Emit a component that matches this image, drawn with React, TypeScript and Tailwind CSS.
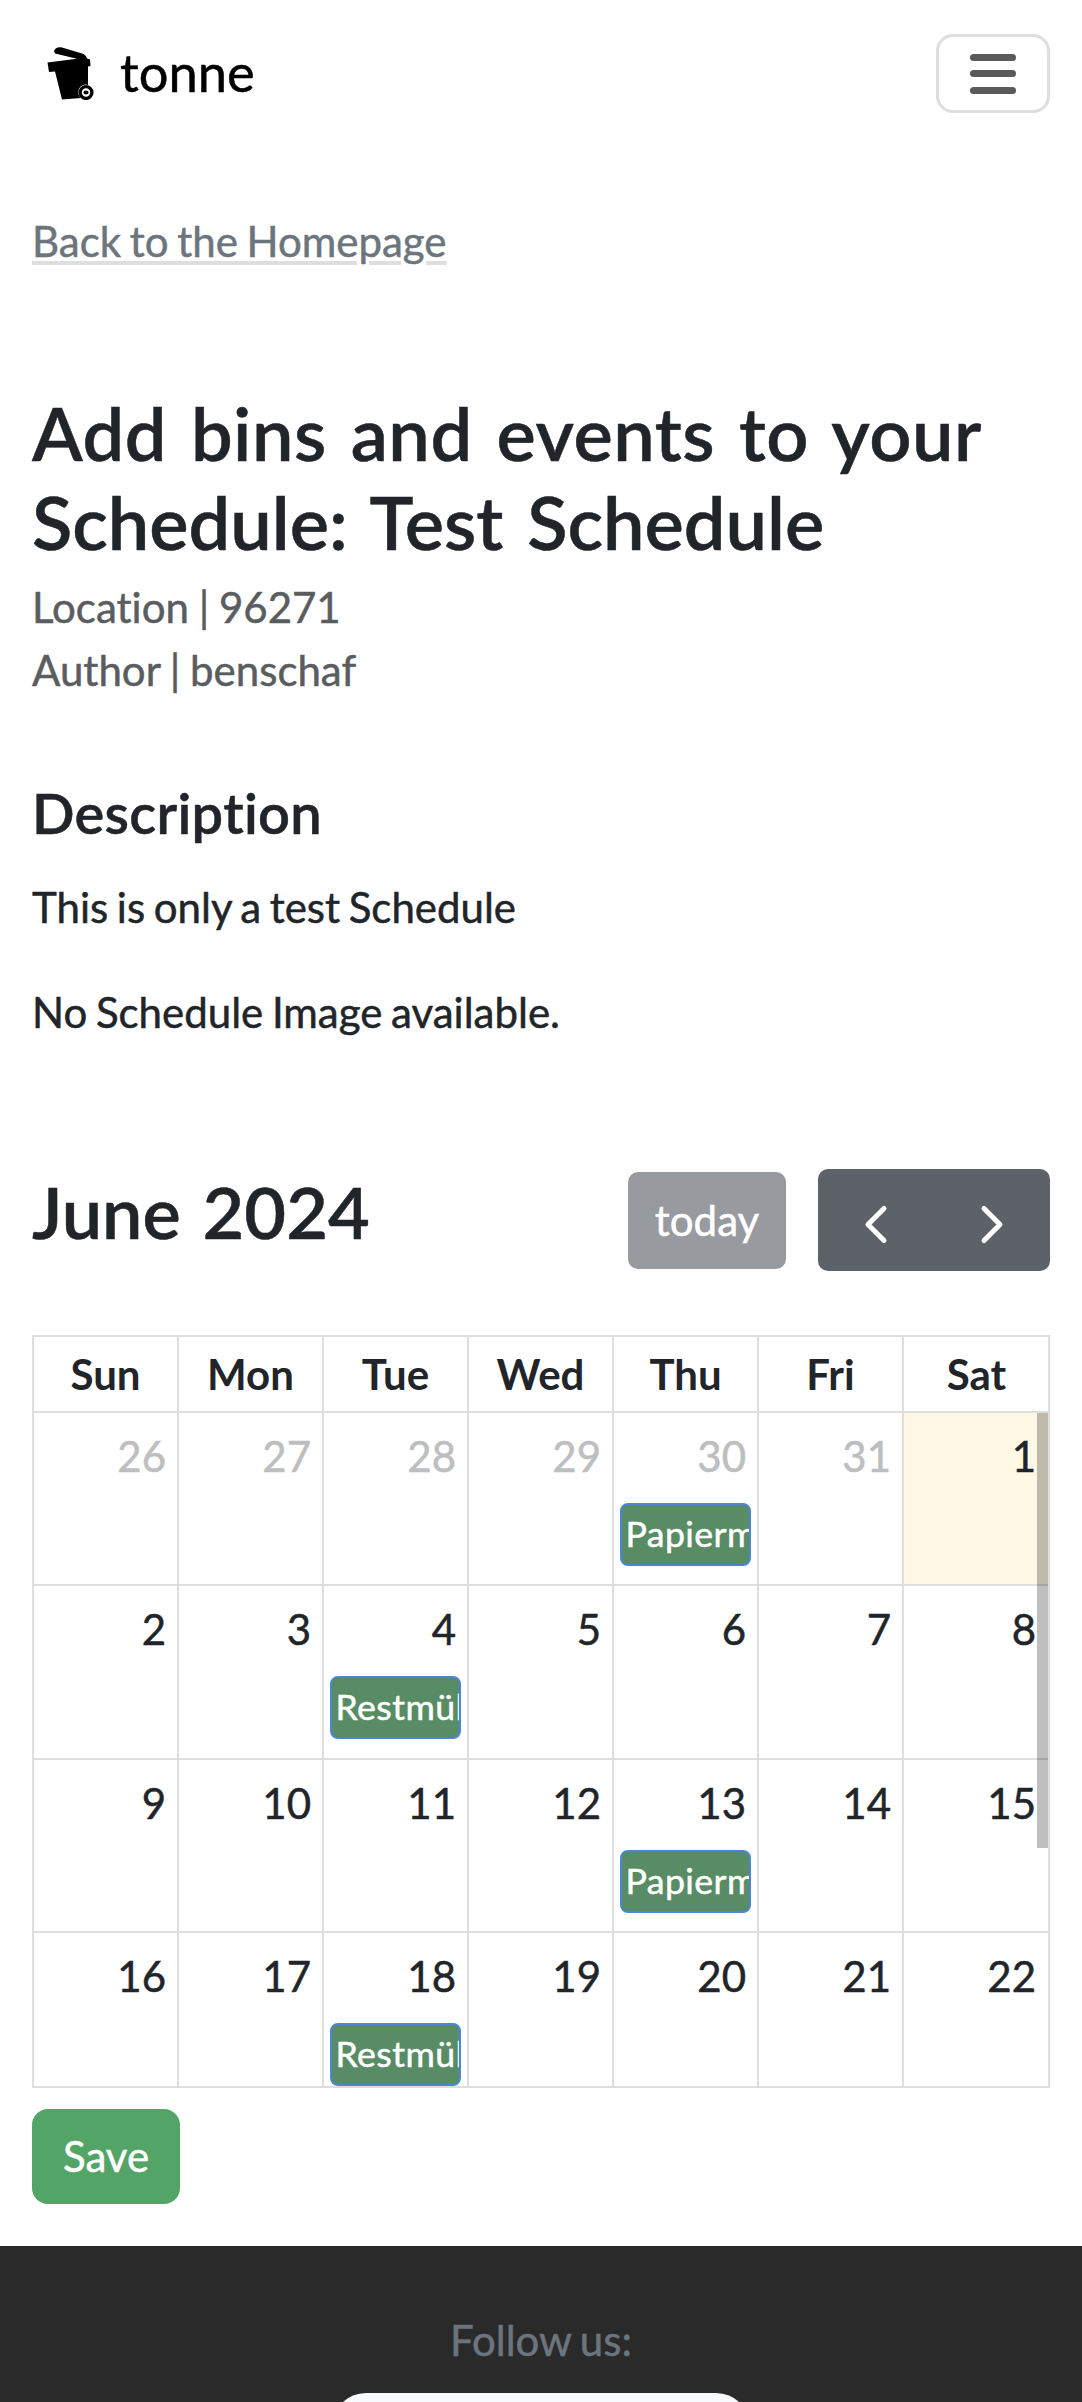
const days = ["Sun", "Mon", "Tue", "Wed", "Thu", "Fri", "Sat"];

type Day = { n: number; muted?: boolean; today?: boolean; event?: string };

const weeks: Day[][] = [
  [
    { n: 26, muted: true },
    { n: 27, muted: true },
    { n: 28, muted: true },
    { n: 29, muted: true },
    { n: 30, muted: true, event: "Papiermüll" },
    { n: 31, muted: true },
    { n: 1, today: true },
  ],
  [{ n: 2 }, { n: 3 }, { n: 4, event: "Restmüll" }, { n: 5 }, { n: 6 }, { n: 7 }, { n: 8 }],
  [{ n: 9 }, { n: 10 }, { n: 11 }, { n: 12 }, { n: 13, event: "Papiermüll" }, { n: 14 }, { n: 15 }],
  [{ n: 16 }, { n: 17 }, { n: 18, event: "Restmüll" }, { n: 19 }, { n: 20 }, { n: 21 }, { n: 22 }],
];

function BinLogo() {
  return (
    <svg className="block h-[54px] w-[50px]" viewBox="0 0 50 54" fill="#000">
      <path d="M8 5C9 2 12 0.500 16 1.500L36 7.500C39 8.500 40 10 41 12.500L44 13.500L44.500 20L42 20.500L42 39A7.500 7.500 0 0 0 35 52L16 53.500L9 25.500L3 26L1.500 16.500L31 12.800L9 7.500Z" />
      <circle cx="40" cy="46.500" r="5.900" fill="#fff" stroke="#000" strokeWidth="3.400" />
      <ellipse cx="40" cy="46.500" rx="2.600" ry="2" />
    </svg>
  );
}

function Chevron({ flip }: { flip?: boolean }) {
  return (
    <svg
      className={"mt-[8px] block h-[42px] w-[42px] " + (flip ? "-scale-x-100" : "")}
      viewBox="0 0 42 42"
      fill="none"
      stroke="#fff"
      strokeWidth="5"
      strokeLinecap="round"
      strokeLinejoin="round"
    >
      <path d="M29 5.500L13 21.500L29 37.500" />
    </svg>
  );
}

export default function App() {
  return (
    <div className="h-[2402px] w-[1082px] overflow-hidden bg-white font-['Lato',sans-serif] text-[42px] leading-[63px] text-[#212529] [font-variant-ligatures:none] [word-spacing:-2.1px] [-webkit-text-stroke:0.5px]">
      <header className="flex h-[147px] items-start justify-between pl-[46px] pr-[32px] pt-[34px]">
        <div className="flex items-center pt-[12px]">
          <BinLogo />
          <span className="-mt-[2px] ml-[24px] text-[52.500px] leading-[54px] text-black">tonne</span>
        </div>
        <button className="flex h-[79px] w-[114px] flex-col items-center justify-center gap-[9.500px] rounded-[17px] border-[3px] border-[#dedede]">
          <span className="h-[7px] w-[46px] rounded-full bg-[#5a5a5a]" />
          <span className="h-[7px] w-[46px] rounded-full bg-[#5a5a5a]" />
          <span className="h-[7px] w-[46px] rounded-full bg-[#5a5a5a]" />
        </button>
      </header>

      <main className="h-[2099px] px-[32px] pt-[63px]">
        <div className="h-[178px]">
          <a className="text-[#6c757d] underline decoration-[#dedede] decoration-[4px] underline-offset-[4px]">
            Back to the Homepage
          </a>
        </div>
        <h1 className="h-[185px] whitespace-nowrap text-[74px] font-semibold leading-[89px]">
          <span className="block tracking-[0.500px] [word-spacing:5px]">Add bins and events to your</span>
          <span className="block tracking-[0px] [word-spacing:5.500px]">Schedule: Test Schedule</span>
        </h1>
        <div className="h-[194px] pt-[3px] text-[#5a5d60] [word-spacing:-1px]">
          <p>Location | 96271</p>
          <p>Author | benschaf</p>
        </div>
        <h2 className="h-[109px] pt-[13px] text-[56px] font-semibold leading-[66px] tracking-[0.300px]">Description</h2>
        <p className="h-[105px]">This is only a test Schedule</p>
        <p className="h-[188px]">No Schedule Image available.</p>

        <div className="flex h-[166px] items-start">
          <h2 className="-mt-[1px] w-[596px] whitespace-nowrap text-[72px] font-semibold leading-[86px] [word-spacing:4px]">
            June 2024
          </h2>
          <button className="mt-[3px] flex h-[97px] w-[158px] items-center justify-center rounded-[10px] bg-[#979a9f] text-white">
            today
          </button>
          <div className="ml-[32px] flex h-[102px] w-[232px] rounded-[10px] bg-[#5d6168]">
            <button className="flex flex-1 items-center justify-center">
              <Chevron />
            </button>
            <button className="flex flex-1 items-center justify-center">
              <Chevron flip />
            </button>
          </div>
        </div>

        <div className="relative h-[753px] w-[1018px] overflow-hidden border-2 border-[#dedede]">
          <div className="grid h-[76px] w-[1015px] grid-cols-7 border-b-2 border-[#dedede]">
            {days.map((d) => (
              <div
                key={d}
                className="border-r-2 border-[#dedede] pt-[6px] text-center font-bold [-webkit-text-stroke:0px] last:border-r-0"
              >
                {d}
              </div>
            ))}
          </div>
          {weeks.map((week, i) => (
            <div
              key={i}
              className="grid h-[173.400px] w-[1015px] grid-cols-7 border-b-2 border-[#dedede] last:border-b-0"
            >
              {week.map((d) => (
                <div
                  key={d.n}
                  className={
                    "min-w-0 border-r-2 border-[#dedede] pl-[5.500px] pr-[6px] last:border-r-0 last:pr-[8px] " +
                    (d.today ? "bg-[#fff8e4]" : "")
                  }
                >
                  <div
                    className={
                      "h-[90px] pr-[5px] pt-[12px] text-right " + (d.muted ? "text-[#bdbebf]" : "text-[#212529]")
                    }
                  >
                    {d.n}
                  </div>
                  {d.event && (
                    <div className="h-[63px] overflow-hidden whitespace-nowrap rounded-[8px] border-2 border-[#4a85d6] bg-[#588c65] pl-[4px] text-[35.700px] leading-[57px] tracking-[0.400px] text-white">
                      {d.event}
                    </div>
                  )}
                </div>
              ))}
            </div>
          ))}
          <div className="absolute right-0 top-[76px] h-[435px] w-[11px] bg-black/25" />
        </div>

        <button className="mt-[21px] flex h-[95px] w-[148px] items-center justify-center rounded-[16px] bg-[#52a567] text-white">
          Save
        </button>
      </main>

      <footer className="flex h-[156px] flex-col items-center bg-[#2a2a2a] pt-[63px]">
        <p className="h-[84px] shrink-0 text-[#6c757d]">Follow us:</p>
        <div className="h-[110px] w-[418px] shrink-0 rounded-[34px] bg-[#f8f9fa]" />
      </footer>
    </div>
  );
}
